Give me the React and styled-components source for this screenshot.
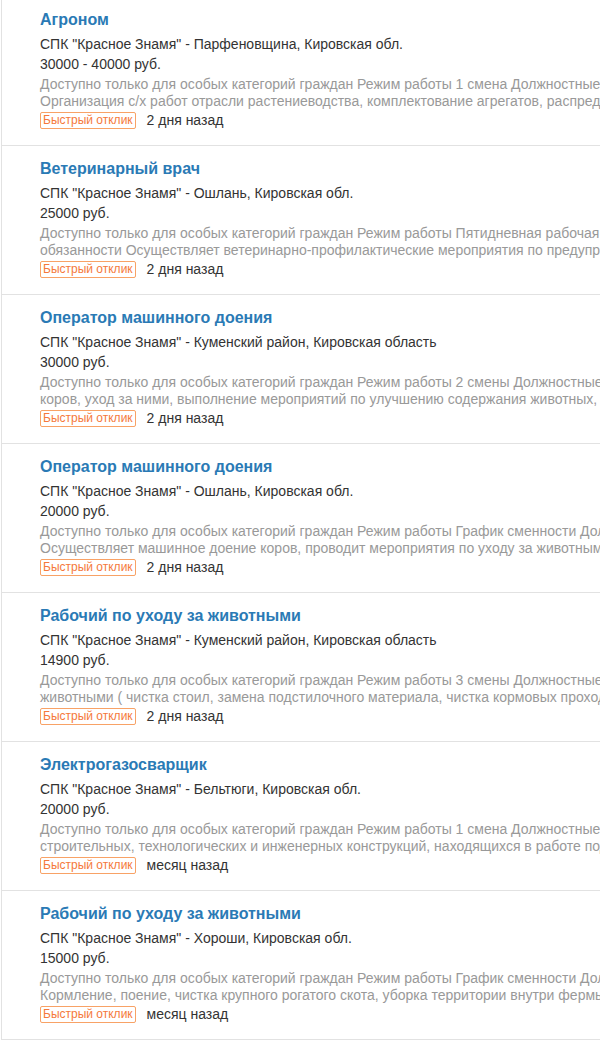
import React from 'react';
import styled, { createGlobalStyle } from 'styled-components';

const GlobalStyle = createGlobalStyle`
  html, body {
    margin: 0;
    padding: 0;
    background: #fff;
    overflow: hidden;
  }
  body {
    font-family: "Liberation Sans", Arial, sans-serif;
  }
`;

const vacancies = [
  {
    title: 'Агроном',
    place: 'Парфеновщина, Кировская обл.',
    salary: '30000 - 40000 руб.',
    lines: [
      'Доступно только для особых категорий граждан Режим работы 1 смена Должностные обязанности',
      'Организация с/х работ отрасли растениеводства, комплектование агрегатов, распределение техники',
    ],
    date: '2 дня назад',
  },
  {
    title: 'Ветеринарный врач',
    place: 'Ошлань, Кировская обл.',
    salary: '25000 руб.',
    lines: [
      'Доступно только для особых категорий граждан Режим работы Пятидневная рабочая неделя Должностные',
      'обязанности Осуществляет ветеринарно-профилактические мероприятия по предупреждению заболеваний',
    ],
    date: '2 дня назад',
  },
  {
    title: 'Оператор машинного доения',
    place: 'Куменский район, Кировская область',
    salary: '30000 руб.',
    lines: [
      'Доступно только для особых категорий граждан Режим работы 2 смены Должностные обязанности Доение',
      'коров, уход за ними, выполнение мероприятий по улучшению содержания животных, соблюдение',
    ],
    date: '2 дня назад',
  },
  {
    title: 'Оператор машинного доения',
    place: 'Ошлань, Кировская обл.',
    salary: '20000 руб.',
    lines: [
      'Доступно только для особых категорий граждан Режим работы График сменности Должностные обязанности',
      'Осуществляет машинное доение коров, проводит мероприятия по уходу за животными',
    ],
    date: '2 дня назад',
  },
  {
    title: 'Рабочий по уходу за животными',
    place: 'Куменский район, Кировская область',
    salary: '14900 руб.',
    lines: [
      'Доступно только для особых категорий граждан Режим работы 3 смены Должностные обязанности Уход за',
      'животными ( чистка стоил, замена подстилочного материала, чистка кормовых проходов )',
    ],
    date: '2 дня назад',
  },
  {
    title: 'Электрогазосварщик',
    place: 'Бельтюги, Кировская обл.',
    salary: '20000 руб.',
    lines: [
      'Доступно только для особых категорий граждан Режим работы 1 смена Должностные обязанности Ремонт',
      'строительных, технологических и инженерных конструкций, находящихся в работе под давлением',
    ],
    date: 'месяц назад',
  },
  {
    title: 'Рабочий по уходу за животными',
    place: 'Хороши, Кировская обл.',
    salary: '15000 руб.',
    lines: [
      'Доступно только для особых категорий граждан Режим работы График сменности Должностные обязанности',
      'Кормление, поение, чистка крупного рогатого скота, уборка территории внутри фермы',
    ],
    date: 'месяц назад',
  },
];

export default function App() {
  return (
    <>
      <GlobalStyle />
      <List>
        {vacancies.map((v, i) => (
          <Item key={i}>
            <Title href="#">{v.title}</Title>
            <Company>СПК "Красное Знамя" - {v.place}</Company>
            <Salary>{v.salary}</Salary>
            <Description>
              {v.lines.map((line, j) => (
                <DescLine key={j}>{line}</DescLine>
              ))}
            </Description>
            <Footer>
              <Badge>Быстрый отклик</Badge>
              <DateText>{v.date}</DateText>
            </Footer>
          </Item>
        ))}
      </List>
    </>
  );
}

const List = styled.div`
  margin-top: -3px;
  margin-left: 1px;
  border-left: 1px solid #e2e2e2;
  width: 800px;
`;

const Item = styled.div`
  padding: 13px 0 15px 38px;
  border-bottom: 1px solid #e2e2e2;
`;

const Title = styled.a`
  display: block;
  font-size: 16px;
  font-weight: bold;
  line-height: 20px;
  color: #2a7ab5;
  text-decoration: none;
  margin-bottom: 4px;
`;

const Company = styled.div`
  font-size: 14px;
  line-height: 20px;
  color: #333;
`;

const Salary = styled.div`
  font-size: 14px;
  line-height: 20px;
  color: #333;
`;

const Description = styled.div`
  margin-top: 2px;
  font-size: 14px;
  line-height: 17px;
  color: #999;
`;

const DescLine = styled.div`
  white-space: nowrap;
`;

const Footer = styled.div`
  display: flex;
  align-items: center;
  gap: 11px;
  height: 20px;
`;

const Badge = styled.span`
  display: inline-block;
  font-size: 12px;
  line-height: 15px;
  padding: 0 2px;
  color: #f5793b;
  border: 1px solid #f8a266;
  border-radius: 2px;
`;

const DateText = styled.span`
  font-size: 14px;
  color: #333;
`;
